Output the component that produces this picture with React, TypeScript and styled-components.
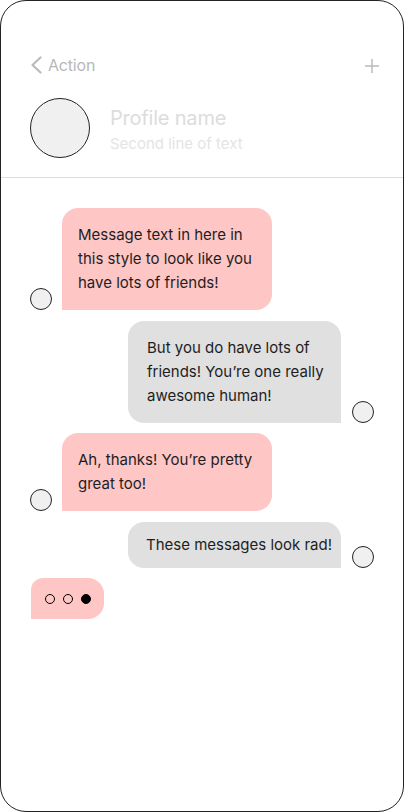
import React from "react";
import styled, { createGlobalStyle } from "styled-components";

type Side = "left" | "right";

interface Message {
  id: number;
  side: Side;
  text: string;
  compact?: boolean;
}

const messages: Message[] = [
  {
    id: 1,
    side: "left",
    text: "Message text in here in this style to look like you have lots of friends!",
  },
  {
    id: 2,
    side: "right",
    text: "But you do have lots of friends! You’re one really awesome human!",
  },
  { id: 3, side: "left", text: "Ah, thanks! You’re pretty great too!" },
  { id: 4, side: "right", text: "These messages look rad!", compact: true },
];

const GlobalStyle = createGlobalStyle`
  html, body {
    margin: 0;
    padding: 0;
    background: #fff;
  }
  body {
    font-family: Inter, "Liberation Sans", Arial, sans-serif;
  }
  * {
    box-sizing: border-box;
  }
`;

const App: React.FC = () => {
  return (
    <>
      <GlobalStyle />
      <Frame>
        <Header>
          <NavRow>
            <BackButton>
              <svg width="12" height="18" viewBox="0 0 12 18" fill="none">
                <path
                  d="M10.5 1.5 L2.5 9 L10.5 16.5"
                  stroke="#bbbbbb"
                  strokeWidth="2.2"
                  strokeLinecap="round"
                  strokeLinejoin="round"
                />
              </svg>
              Action
            </BackButton>
            <AddButton>
              <svg width="16" height="16" viewBox="0 0 16 16" fill="none">
                <path
                  d="M8 1 V15 M1 8 H15"
                  stroke="#bbbbbb"
                  strokeWidth="1.5"
                />
              </svg>
            </AddButton>
          </NavRow>
          <ProfileRow>
            <ProfileAvatar />
            <ProfileText>
              <ProfileName>Profile name</ProfileName>
              <ProfileSub>Second line of text</ProfileSub>
            </ProfileText>
          </ProfileRow>
        </Header>

        <Thread>
          {messages.map((m) => (
            <Row key={m.id} side={m.side}>
              {m.side === "left" && <SmallAvatar />}
              <Bubble side={m.side} compact={m.compact}>
                {m.text}
              </Bubble>
              {m.side === "right" && <SmallAvatar />}
            </Row>
          ))}
          <TypingBubble>
            <Dot />
            <Dot />
            <Dot filled />
          </TypingBubble>
        </Thread>
      </Frame>
    </>
  );
};

export default App;

const Frame = styled.div`
  width: 404px;
  height: 812px;
  border: 1px solid #222;
  border-radius: 26px;
  overflow: hidden;
  background: #fff;
  display: flex;
  flex-direction: column;
`;

const Header = styled.header`
  display: flex;
  flex-direction: column;
  gap: 21px;
  padding: 52px 23px 19px 29px;
  border-bottom: 1px solid #dddddd;
`;

const NavRow = styled.div`
  display: flex;
  align-items: center;
  justify-content: space-between;
  height: 24px;
`;

const BackButton = styled.div`
  display: flex;
  align-items: center;
  gap: 6px;
  font-size: 16px;
  color: #b8b8b8;
  letter-spacing: -0.2px;
`;

const AddButton = styled.div`
  display: flex;
  align-items: center;
  justify-content: center;
  width: 16px;
  height: 16px;
  margin-top: 2px;
`;

const ProfileRow = styled.div`
  display: flex;
  align-items: center;
  gap: 20px;
`;

const ProfileAvatar = styled.div`
  width: 60px;
  height: 60px;
  border-radius: 50%;
  border: 1px solid #222;
  background: #f0f0f0;
  flex-shrink: 0;
`;

const ProfileText = styled.div`
  display: flex;
  flex-direction: column;
  gap: 3px;
  margin-top: 2px;
`;

const ProfileName = styled.div`
  font-size: 20px;
  line-height: 26px;
  color: #dcdcdc;
  letter-spacing: -0.2px;
`;

const ProfileSub = styled.div`
  font-size: 15px;
  line-height: 20px;
  color: #e4e4e4;
`;

const Thread = styled.main`
  display: flex;
  flex-direction: column;
  gap: 10.5px;
  padding: 30px 29px 0 29px;
`;

const Row = styled.div<{ side: Side }>`
  display: flex;
  align-items: flex-end;
  justify-content: ${({ side }) => (side === "left" ? "flex-start" : "flex-end")};
  gap: ${({ side }) => (side === "left" ? "10px" : "11px")};
`;

const SmallAvatar = styled.div`
  width: 22px;
  height: 22px;
  border-radius: 50%;
  border: 1px solid #222;
  background: #f0f0f0;
  flex-shrink: 0;
`;

const Bubble = styled.div<{ side: Side; compact?: boolean }>`
  width: ${({ side }) => (side === "left" ? "210px" : "213px")};
  padding: ${({ compact, side }) =>
    compact ? "11px 10px 11px 18px" : side === "left" ? "15px 16px" : "15px 16px 15px 19px"};
  white-space: ${({ compact }) => (compact ? "nowrap" : "normal")};
  font-size: 15px;
  line-height: 24px;
  color: #1e1e1e;
  background: ${({ side }) => (side === "left" ? "#ffc6c6" : "#e0e0e0")};
  border-radius: ${({ side }) =>
    side === "left" ? "16px 16px 16px 0" : "16px 16px 0 16px"};
`;

const TypingBubble = styled.div`
  align-self: flex-start;
  display: flex;
  align-items: center;
  gap: 8px;
  height: 41px;
  padding: 0 13px 0 14px;
  margin-left: 1px;
  background: #ffc6c6;
  border-radius: 12px 16px 16px 0;
`;

const Dot = styled.span<{ filled?: boolean }>`
  width: 10px;
  height: 10px;
  border-radius: 50%;
  border: 1px solid #000;
  background: ${({ filled }) => (filled ? "#000" : "transparent")};
`;
